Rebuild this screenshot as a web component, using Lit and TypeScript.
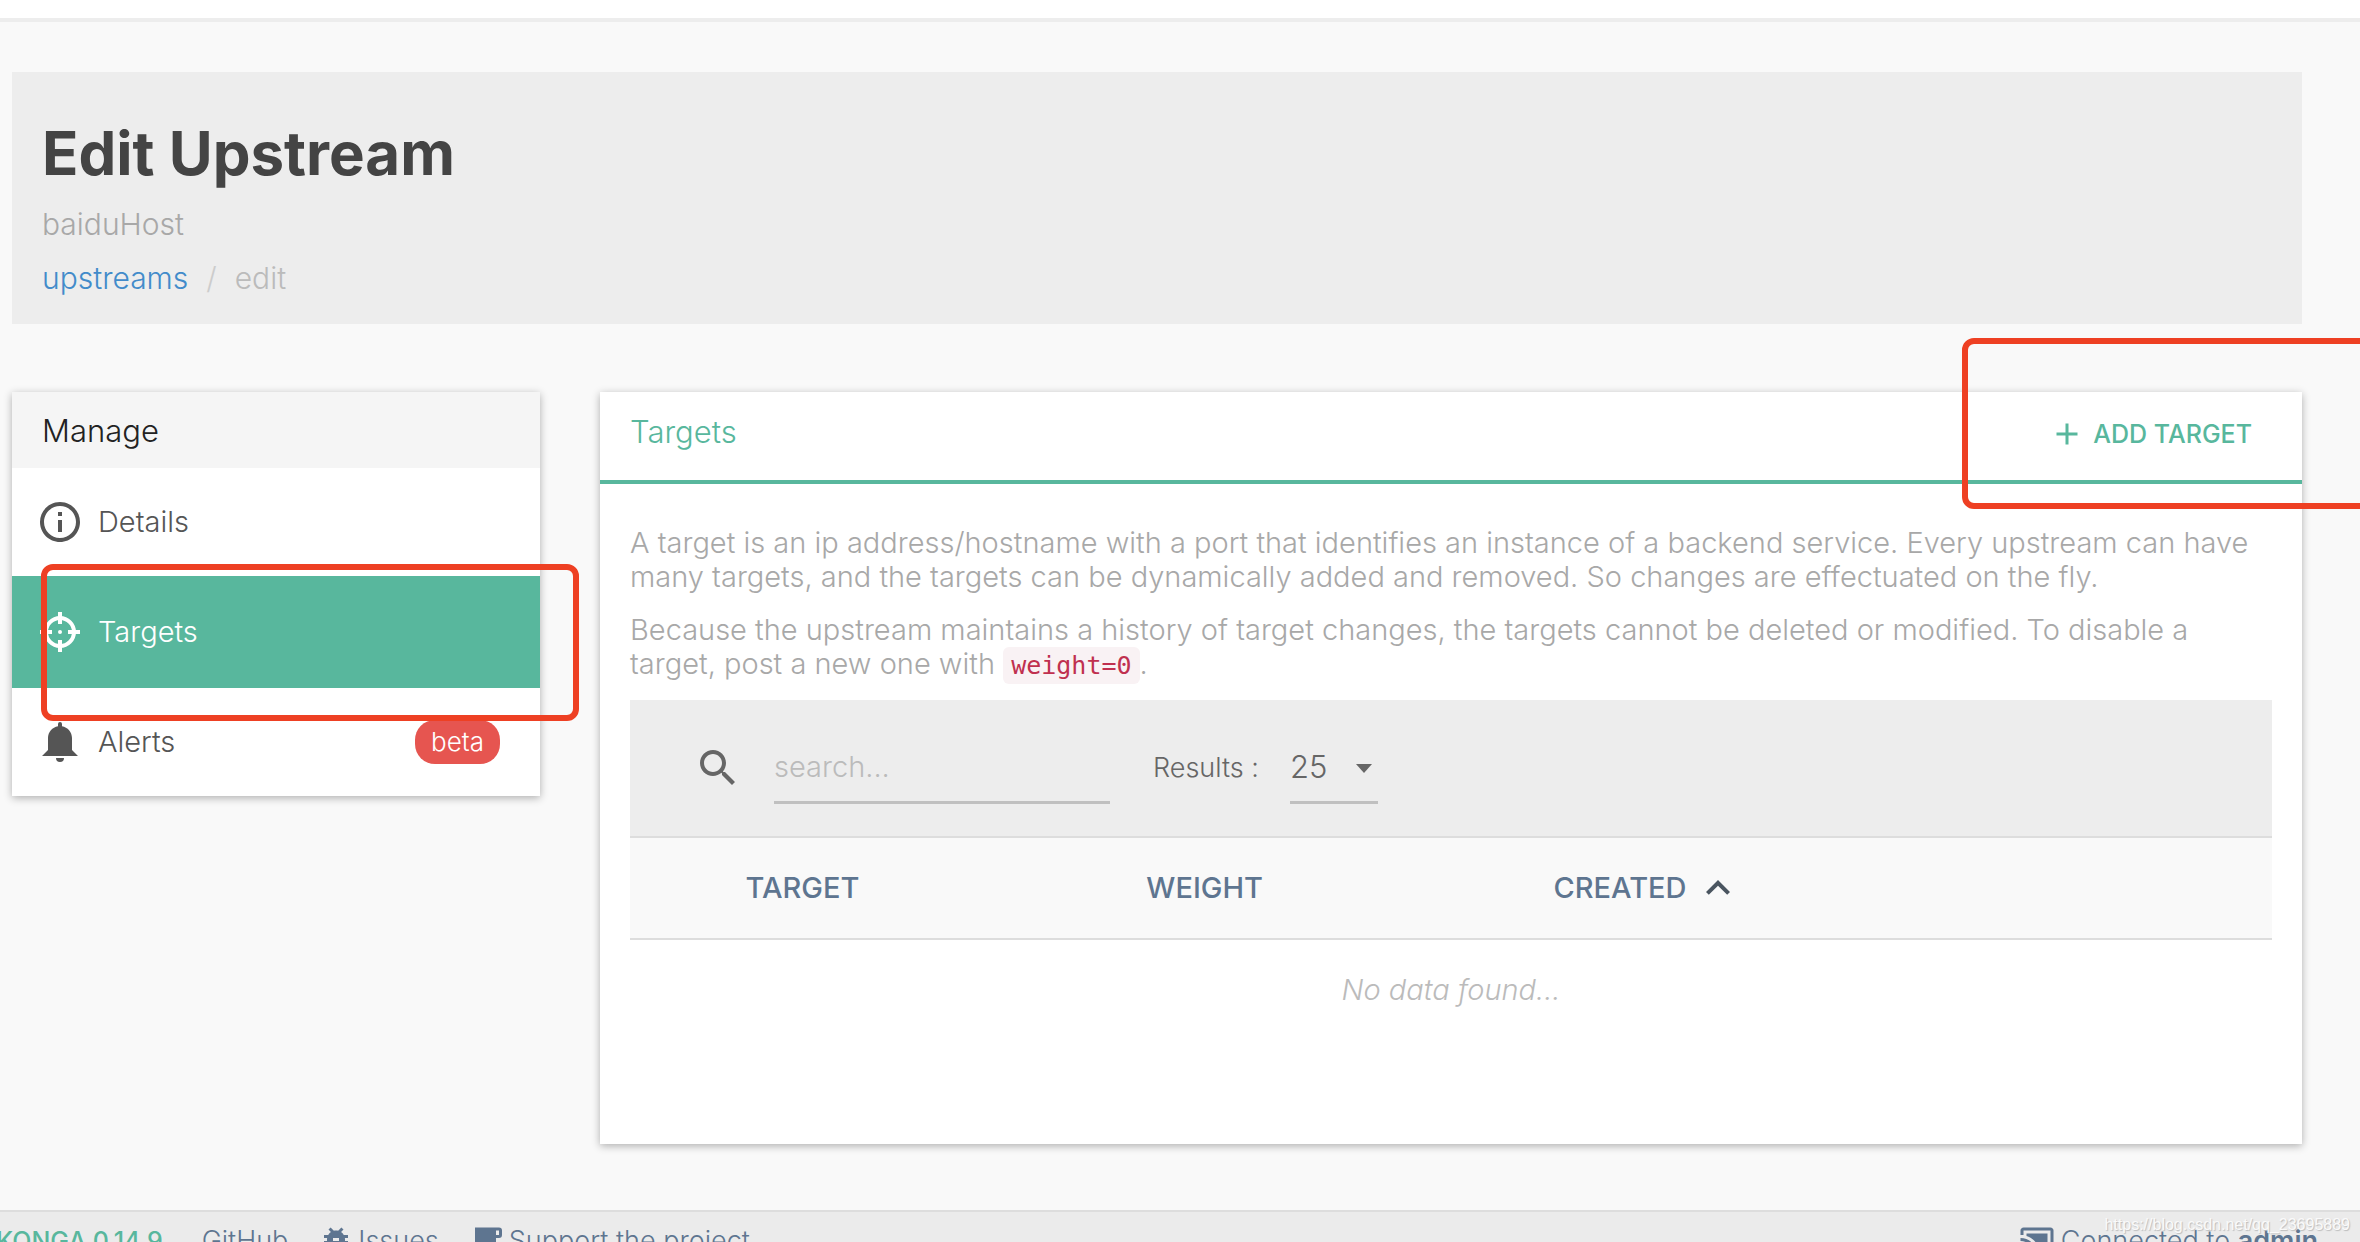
import { LitElement, html, css, svg } from "lit";
import { customElement, state } from "lit/decorators.js";

const icon = (size: number, body: unknown, box = "0 0 24 24") =>
  html`<svg class="icon" width=${size} height=${size} viewBox=${box} fill="currentColor" aria-hidden="true">${body}</svg>`;

const infoIcon = icon(
  48,
  svg`<path d="M11 17h2v-6h-2v6zm1-15C6.48 2 2 6.48 2 12s4.48 10 10 10 10-4.48 10-10S17.52 2 12 2zm0 18c-4.41 0-8-3.59-8-8s3.59-8 8-8 8 3.59 8 8-3.59 8-8 8zM11 9h2V7h-2v2z"/>`
);
const targetIcon = icon(
  48,
  svg`<circle cx="12" cy="12" r="7" fill="none" stroke="currentColor" stroke-width="2"/><path d="M11 2h2v6h-2zM11 16h2v6h-2zM2 11h6v2h-6zM16 11h6v2h-6z"/><circle cx="12" cy="12" r="1"/>`
);
const bellIcon = icon(
  48,
  svg`<path d="M14 20a2 2 0 0 1-4 0h4zM12 2a1 1 0 0 1 1 1v1.080c2.840.480 5 2.940 5 5.920v6l3 3H3l3-3v-6c0-2.980 2.160-5.440 5-5.920V3a1 1 0 0 1 1-1z"/>`
);
const searchIcon = icon(
  48,
  svg`<path d="M15.500 14h-.790l-.280-.270C15.410 12.590 16 11.110 16 9.500 16 5.910 13.090 3 9.500 3S3 5.910 3 9.500 5.910 16 9.500 16c1.610 0 3.090-.590 4.230-1.570l.270.280v.790l5 4.990L20.490 19l-4.990-5zm-6 0C7.010 14 5 11.990 5 9.500S7.010 5 9.500 5 14 7.010 14 9.500 11.990 14 9.500 14z"/>`
);
const plusIcon = icon(36, svg`<path d="M19 13h-6v6h-2v-6H5v-2h6V5h2v6h6v2z"/>`);
const chevronIcon = icon(48, svg`<path d="M7.410 15.410 12 10.830l4.590 4.580L18 14l-6-6-6 6z"/>`);
const bugIcon = icon(
  36,
  svg`<path d="M20 8h-2.810c-.450-.780-1.070-1.450-1.820-1.960L17 4.410 15.590 3l-2.170 2.170C12.960 5.060 12.490 5 12 5s-.960.060-1.410.170L8.410 3 7 4.410l1.620 1.630C7.880 6.550 7.260 7.220 6.810 8H4v2h2.090c-.050.330-.090.660-.090 1v1H4v2h2v1c0 .340.040.670.090 1H4v2h2.810c1.040 1.790 2.970 3 5.190 3s4.150-1.210 5.190-3H20v-2h-2.090c.050-.330.090-.660.090-1v-1h2v-2h-2v-1c0-.340-.040-.670-.090-1H20V8zm-6 8h-4v-2h4v2zm0-4h-4v-2h4v2z"/>`
);
const mugIcon = icon(
  36,
  svg`<path d="M2 21v-2h18v2H2zM20 8V5h-2v3h2zM20 3a2 2 0 0 1 2 2v3a2 2 0 0 1-2 2h-2v3a4 4 0 0 1-4 4H8a4 4 0 0 1-4-4V3h16z"/>`
);
const castIcon = icon(
  36,
  svg`<path d="M1 18v3h3c0-1.660-1.340-3-3-3zm0-4v2c2.760 0 5 2.240 5 5h2c0-3.870-3.130-7-7-7zM19 7H5v1.630c3.960 1.280 7.090 4.410 8.370 8.370H19V7zM1 10v2c4.970 0 9 4.030 9 9h2c0-6.080-4.930-11-11-11zm20-7H3c-1.100 0-2 .900-2 2v3h2V5h18v14h-7v2h7c1.100 0 2-.900 2-2V5c0-1.100-.900-2-2-2z"/>`
);

@customElement("app-root")
export class AppRoot extends LitElement {
  @state() private query = "";

  static styles = css`
    :host {
      display: flex;
      flex-direction: column;
      height: 100vh;
      overflow: hidden;
      position: relative;
      box-sizing: border-box;
      background: #f9f9f9;
      color: #a8a8a8;
      font: 300 29px/34px Inter, "Open Sans", sans-serif;
    }
    * { box-sizing: border-box; }
    .icon { display: block; flex: none; }
    a { color: inherit; text-decoration: none; }
    .topbar { flex: none; height: 22px; background: #fff; border-bottom: 4px solid #ededed; }
    .page {
      flex: none;
      display: flex;
      flex-direction: column;
      gap: 68px;
      padding: 50px 58px 66px 12px;
    }
    .hero { background: #ededed; padding: 50px 30px 29px; font-size: 30px; }
    .title { margin: 0 0 23px; font-size: 60px; line-height: 62px; font-weight: 700; color: #444; }
    .subtitle { margin: 0 0 20px; }
    .crumbs { display: flex; gap: 18px; margin: 0; padding: 0; list-style: none; color: #bbb; }
    .crumbs a { color: #428bca; }
    .crumbs li { display: flex; gap: 18px; }
    .crumbs li + li::before { content: "/"; color: #ccc; }
    .columns { display: grid; grid-template-columns: 528px 1fr; gap: 60px; align-items: start; }
    .card { position: relative; background: #fff; box-shadow: 0 2px 8px rgba(0, 0, 0, 0.3); }
    .side-title {
      margin: 0;
      padding: 21px 30px 19px;
      font-size: 31px;
      line-height: 36px;
      font-weight: 300;
      background: #f5f5f5;
      color: #222;
    }
    .menu { margin: 0; padding: 0; list-style: none; }
    .item { display: flex; align-items: center; gap: 14px; height: 108px; padding: 0 40px 0 24px; color: #555; }
    .item.active { height: 112px; background: #58b79d; color: #fff; }
    .label { flex: 1; }
    .badge { padding: 5px 16px; border-radius: 20px; background: #e65550; color: #fff; font-size: 26px; }
    .mark { position: absolute; border: 6px solid #ee4023; border-radius: 12px; pointer-events: none; }
    .mark.menu-mark { left: 29px; right: -39px; top: 172px; height: 157px; }
    .mark.add-mark { left: 80%; right: -80px; top: -54px; height: 171px; }
    .card-head {
      display: flex;
      justify-content: space-between;
      align-items: center;
      height: 92px;
      padding: 0 50px 4px 30px;
      border-bottom: 4px solid #58b79d;
      color: #58b79d;
    }
    .card-title { margin: 0 0 4px; font-size: 31px; line-height: 36px; font-weight: 300; }
    .add {
      display: flex;
      align-items: center;
      gap: 8px;
      padding: 0;
      border: 0;
      background: none;
      color: inherit;
      font: 500 25px/34px Inter, sans-serif;
    }
    .card-body { padding: 42px 30px 85px; }
    .text { margin: 0 0 19px; }
    .code {
      padding: 4px 8px;
      border-radius: 6px;
      background: #f9f2f4;
      color: #c0304f;
      font: 400 25px/30px "DejaVu Sans Mono", monospace;
    }
    .tools { display: flex; align-items: center; height: 138px; padding: 0 64px; background: #ededed; border-bottom: 2px solid #ddd; color: #666; }
    .search {
      width: 336px;
      height: 72px;
      margin: 0 43px 0 32px;
      padding: 0;
      border: 0;
      border-bottom: 3px solid #c0c0c0;
      background: none;
      color: #666;
      font: inherit;
      outline: 0;
    }
    .search::placeholder { color: #bbb; opacity: 1; }
    .results { margin-right: 31px; font-size: 27px; }
    .pick { position: relative; display: flex; align-items: center; }
    .pick::after {
      content: "";
      position: absolute;
      right: 6px;
      border: 8px solid transparent;
      border-top: 9px solid #666;
      border-bottom: 0;
      pointer-events: none;
    }
    .size {
      appearance: none;
      width: 88px;
      height: 72px;
      padding: 0;
      border: 0;
      border-bottom: 3px solid #c0c0c0;
      border-radius: 0;
      background: none;
      color: #666;
      font: 300 31px/36px Inter, sans-serif;
    }
    .table { width: 100%; table-layout: fixed; border-collapse: collapse; }
    .table th { height: 101px; padding: 0; background: #f9f9f9; border-bottom: 2px solid #ddd; color: #5e7590; font-weight: 500; }
    .c-target { width: 21%; }
    .c-weight { width: 28%; }
    .c-created { width: 26%; }
    .sort { display: inline-flex; align-items: center; gap: 8px; padding: 0; border: 0; background: none; color: inherit; font: inherit; }
    .sort .icon { color: #4a5560; }
    .empty { height: 120px; padding: 0 0 20px; text-align: center; font-style: italic; color: #bbb; }
    .footer {
      flex: none;
      position: relative;
      display: flex;
      align-items: center;
      gap: 30px;
      height: 60px;
      padding: 0 42px 0 0;
      background: #ebebeb;
      border-top: 2px solid #ddd;
      color: #5e7590;
      font-size: 27px;
    }
    .brand { margin: 0 9px 0 -4px; color: #58b79d; font-size: 25px; font-weight: 500; }
    .link { display: flex; align-items: center; gap: 4px; }
    .status { display: flex; align-items: center; gap: 6px; margin-left: auto; }
    .status b { font-weight: 600; }
    .watermark {
      position: absolute;
      right: 10px;
      top: 2px;
      color: #fafafa;
      text-shadow: 1px 1px 1px #bbb;
      font: 400 16px/22px "Liberation Sans", sans-serif;
    }
  `;

  render() {
    return html`
      <div class="topbar"></div>
      <main class="page">
        <header class="hero">
          <h1 class="title">Edit Upstream</h1>
          <p class="subtitle">baiduHost</p>
          <ol class="crumbs">
            <li><a href="#upstreams">upstreams</a></li>
            <li>edit</li>
          </ol>
        </header>
        <div class="columns">
          <nav class="card">
            <h2 class="side-title">Manage</h2>
            <ul class="menu">
              <li><a class="item" href="#details">${infoIcon}<span class="label">Details</span></a></li>
              <li><a class="item active" href="#targets">${targetIcon}<span class="label">Targets</span></a></li>
              <li><a class="item" href="#alerts">${bellIcon}<span class="label">Alerts</span><span class="badge">beta</span></a></li>
            </ul>
            <div class="mark menu-mark"></div>
          </nav>
          <section class="card">
            <div class="card-head">
              <h2 class="card-title">Targets</h2>
              <button class="add" type="button">${plusIcon}ADD TARGET</button>
            </div>
            <div class="card-body">
              <p class="text">
                A target is an ip address/hostname with a port that identifies an instance of a backend service. Every
                upstream can have many targets, and the targets can be dynamically added and removed. So changes are
                effectuated on the fly.
              </p>
              <p class="text">
                Because the upstream maintains a history of target changes, the targets cannot be deleted or modified. To
                disable a target, post a new one with <code class="code">weight=0</code>.
              </p>
              <div class="tools">
                ${searchIcon}
                <input
                  class="search"
                  type="text"
                  placeholder="search..."
                  aria-label="search..."
                  .value=${this.query}
                  @input=${(e: Event) => (this.query = (e.target as HTMLInputElement).value)}
                />
                <label class="results" for="size">Results :</label>
                <span class="pick">
                  <select class="size" id="size"><option selected>25</option></select>
                </span>
              </div>
              <table class="table">
                <colgroup>
                  <col class="c-target" /><col class="c-weight" /><col class="c-created" /><col />
                </colgroup>
                <thead>
                  <tr>
                    <th scope="col"><button class="sort" type="button">TARGET</button></th>
                    <th scope="col"><button class="sort" type="button">WEIGHT</button></th>
                    <th scope="col"><button class="sort" type="button">CREATED ${chevronIcon}</button></th>
                    <th></th>
                  </tr>
                </thead>
                <tbody>
                  <tr><td class="empty" colspan="4">No data found...</td></tr>
                </tbody>
              </table>
            </div>
            <div class="mark add-mark"></div>
          </section>
        </div>
      </main>
      <footer class="footer">
        <a class="brand" href="#konga">KONGA 0.14.9</a>
        <a class="link" href="#github">GitHub</a>
        <a class="link" href="#issues">${bugIcon}Issues</a>
        <a class="link" href="#support">${mugIcon}Support the project</a>
        <span class="status">${castIcon}<span>Connected to <b>admin</b></span></span>
        <span class="watermark">https://blog.csdn.net/qq_23695889</span>
      </footer>
    `;
  }
}
